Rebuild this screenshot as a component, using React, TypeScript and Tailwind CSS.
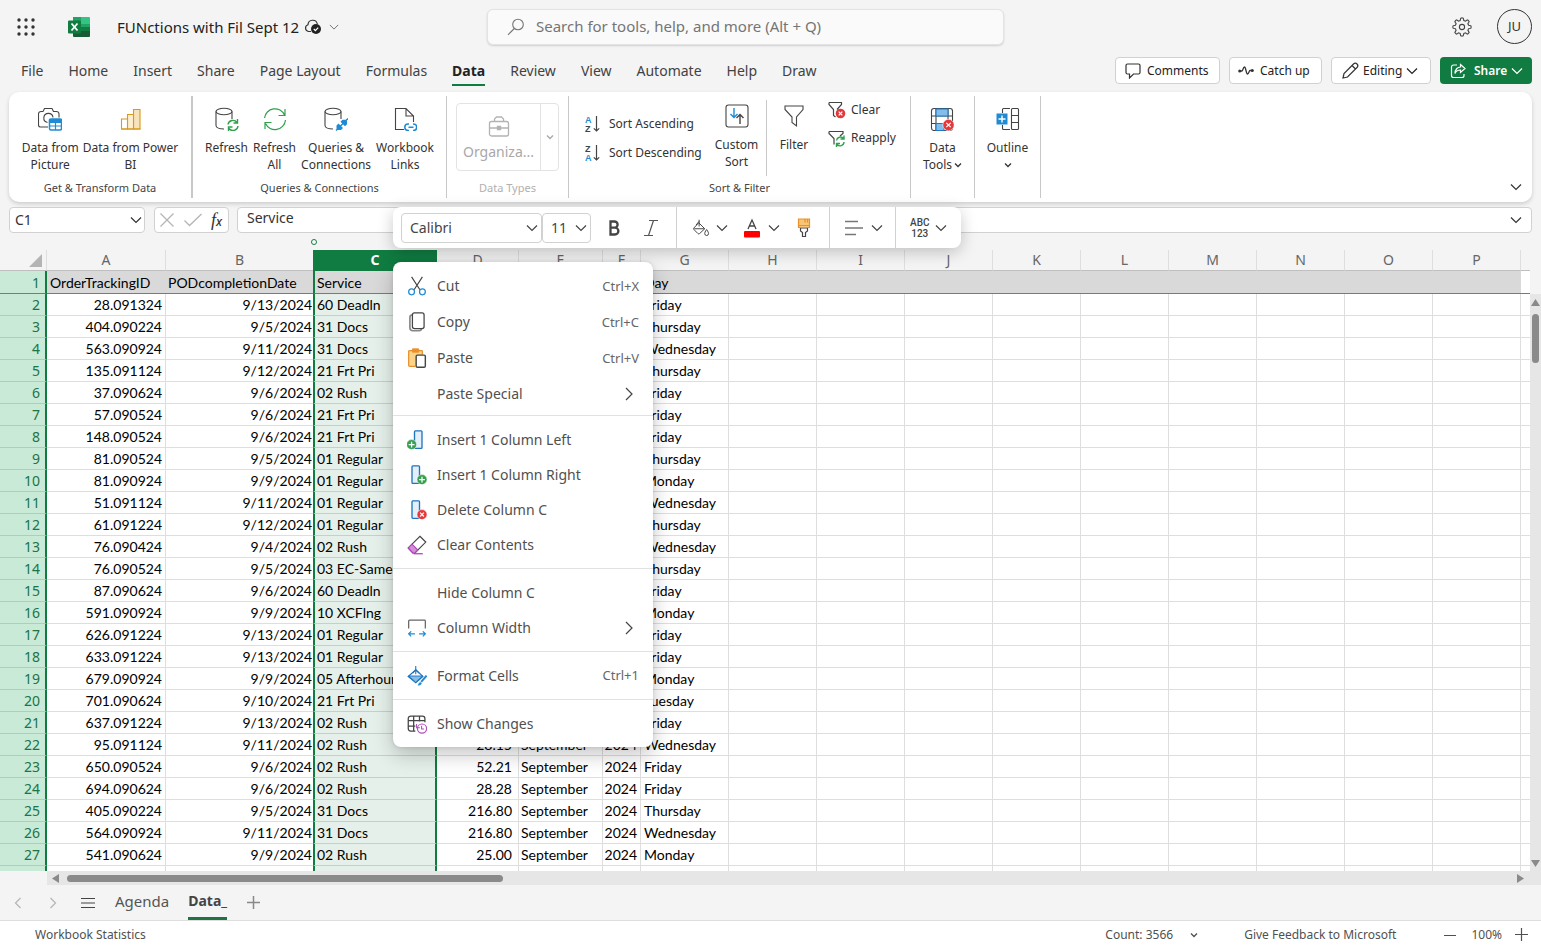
import React from "react";

type IconProps = { className?: string };

const Chevron = ({ className = "h-3 w-3" }: IconProps) => (
  <svg viewBox="0 0 12 12" className={className} fill="none" stroke="currentColor" strokeWidth="1.2">
    <path d="M1 3.500 6 8.500 11 3.500" />
  </svg>
);

const MiniChevron = () => (
  <svg viewBox="0 0 8 8" className="inline-block h-2 w-2" fill="none" stroke="currentColor" strokeWidth="1.3">
    <path d="M1 2.500 4 5.500 7 2.500" />
  </svg>
);

const Svg = ({ className = "h-6 w-6", children }: IconProps & { children: React.ReactNode }) => (
  <svg viewBox="0 0 24 24" className={className + " shrink-0"} fill="none" stroke="#444" strokeWidth="1.1">
    {children}
  </svg>
);

const Database = () => (
  <>
    <ellipse cx="9" cy="4.5" rx="8" ry="3.2" />
    <path d="M1 4.500V18.500C1 20.500 4.500 22 9 22M17 4.500V12" />
  </>
);

const PictureIcon = () => (
  <Svg className="h-6 w-6">
    <path d="M10 20H2.500A2 2 0 0 1 .500 18V7A2.500 2.500 0 0 1 3 4.500H5L6.500 1.500H14L15.500 4.500H18.500A2.500 2.500 0 0 1 21 7V10.500" />
    <path d="M9.500 15.500A4.600 4.600 0 1 1 15 10.500" />
    <rect x="11.500" y="12" width="12" height="11" rx="1.500" fill="#fff" stroke="#1e8bd4" strokeWidth="1.500" />
    <path d="M11.500 12.500h12v3h-12zM17.500 15v8M11.500 19h12" fill="#1e8bd4" stroke="#1e8bd4" strokeWidth="1.200" />
  </Svg>
);

const PowerBiIcon = () => (
  <Svg>
    <path d="M14.500 2.500h6.500v19.500h-6.500z" fill="#f6e3bb" stroke="#d99a1a" />
    <path d="M8.500 7.500h6v14.500h-6z" fill="#fbefd3" stroke="#d99a1a" />
    <path d="M2.500 12h6v10h-6z" fill="#fff" stroke="#d99a1a" />
    <path d="M2 22h19.500" stroke="#d99a1a" />
  </Svg>
);

const RefreshIcon = () => (
  <Svg>
    <Database />
    <g stroke="#2fa14c" strokeWidth="1.400">
      <path d="M13 17.500a5 5 0 0 1 9-2M22.500 12v4H18.500M23 19a5 5 0 0 1-9 2.500M13.500 24v-4h4" />
    </g>
  </Svg>
);

const RefreshAllIcon = () => (
  <Svg>
    <g stroke="#2fa14c" strokeWidth="1.200">
      <path d="M1.500 11A10.500 10.500 0 0 1 21.500 8M22 2v6.500h-6.500M22.500 13A10.500 10.500 0 0 1 2.500 16.500M2 22v-6.500h6.500" />
    </g>
  </Svg>
);

const QueriesIcon = () => (
  <Svg>
    <Database />
    <path d="M12 23.500 24 11.500" stroke="#1e8bd4" strokeWidth="1.500" />
    <path d="M14.500 16.500l4.500 4.500-2 2h-3l-1.500-1.500v-3zM16.500 14.800l2-2h3l1.500 1.500v3l-2 2z" fill="#1e8bd4" stroke="none" />
  </Svg>
);

const WorkbookLinksIcon = () => (
  <Svg>
    <path d="M11 22.500H2.500V1.500H13L20.500 9v6M13 1.500V9h7.500" />
    <path d="M16 17h-1a3.200 3.200 0 0 0 0 6.400h1M20 17h.500a3.200 3.200 0 0 1 0 6.400H20M15.500 20.200h5" stroke="#1e8bd4" strokeWidth="1.500" />
  </Svg>
);

const BriefcaseIcon = () => (
  <svg viewBox="0 0 24 24" className="h-6 w-6" fill="none" stroke="#b3b3b3" strokeWidth="1.300">
    <rect x="2.500" y="7.500" width="19" height="14.500" rx="2" />
    <path d="M7.500 7.500V5l2-2h5l2 2v2.500M2.500 14h19" />
    <path d="M10.500 12.500h3v3h-3z" fill="#b3b3b3" />
  </svg>
);

const SortIcon = ({ down = false }: { down?: boolean }) => (
  <svg viewBox="0 0 16 18" className="h-[18px] w-4 shrink-0" fill="none" stroke="#444" strokeWidth="1.200">
    <text x="0" y="8" fontFamily="Liberation Sans, sans-serif" fontSize="9" fontWeight="bold" stroke="none" fill={down ? "#444" : "#1e8bd4"}>
      {down ? "Z" : "A"}
    </text>
    <text x="0" y="17" fontFamily="Liberation Sans, sans-serif" fontSize="9" fontWeight="bold" stroke="none" fill={down ? "#1e8bd4" : "#444"}>
      {down ? "A" : "Z"}
    </text>
    <path d="M11.500 1v15M8.800 13.300l2.700 2.700 2.700-2.700" />
  </svg>
);

const CustomSortIcon = () => (
  <Svg>
    <rect x="1" y="1" width="22" height="22" rx="2.500" />
    <path d="M9 4v9.500M5.500 10 9 13.500l3.500-3.500" stroke="#1e8bd4" strokeWidth="1.400" />
    <path d="M15 20v-9.500M11.500 14l3.500-3.500 3.500 3.500" strokeWidth="1.400" />
  </Svg>
);

const FilterIcon = () => (
  <Svg>
    <path d="M3 2h18v3.500L14.500 13v9L10 18.500V13L3 5.500z" />
  </Svg>
);

const ClearFilterIcon = () => (
  <svg viewBox="0 0 18 18" className="h-[18px] w-[18px] shrink-0" fill="none" stroke="#444" strokeWidth="1.200">
    <path d="M1 1.500h12.500v2L9 8.500M1 1.500v2l4.500 5v6l2 1.500" />
    <circle cx="12.500" cy="12.500" r="4.800" fill="#e5383b" stroke="none" />
    <path d="m10.700 10.700 3.600 3.600m0-3.600-3.600 3.600" stroke="#fff" />
  </svg>
);

const ReapplyIcon = () => (
  <svg viewBox="0 0 18 18" className="h-[18px] w-[18px] shrink-0" fill="none" stroke="#444" strokeWidth="1.200">
    <path d="M1 2.500h14v2l-3 2.500M1 2.500v2l5 5v6" />
    <path d="M8.500 11.500a4 4 0 0 1 7-2M16 6.500v3.500h-3.500M16 13a4 4 0 0 1-7 2.500M8.500 18v-3.500H12" stroke="#2fa14c" strokeWidth="1.400" />
  </svg>
);

const DataToolsIcon = () => (
  <Svg>
    <rect x="1.500" y="1.500" width="21" height="22" rx="2.500" />
    <path d="M1.500 9h21M1.500 16.500h21M6 1.500v22M18 1.500v22" />
    <path d="M6 2h12v7H6zM6 16.500h8v7H6z" fill="#83bdec" stroke="#1e78c8" />
    <circle cx="18.500" cy="18" r="5.700" fill="#e5383b" stroke="#fff" strokeWidth=".600" />
    <path d="m16.300 15.800 4.400 4.400m0-4.400-4.400 4.400" stroke="#fff" strokeWidth="1.200" />
  </Svg>
);

const OutlineIcon = () => (
  <Svg>
    <rect x="15.500" y="1.500" width="7" height="21" rx="1" />
    <path d="M15.500 8.500h7M15.500 15.500h7M14 1.500H7.500a1 1 0 0 0-1 1V6M14 22.500H7.500a1 1 0 0 1-1-1V18" />
    <rect x="0.500" y="6.500" width="11" height="11" fill="#1e8bd4" stroke="none" />
    <path d="M6 8.500v7M2.500 12h7" stroke="#fff" strokeWidth="1.400" />
  </Svg>
);

const RibbonButton = ({ icon, lines, className = "" }: { icon: React.ReactNode; lines: React.ReactNode[]; className?: string }) => (
  <button className={"flex flex-col items-center whitespace-nowrap text-xs leading-[17px] text-[#333] " + className}>
    {icon}
    <span className="mt-2 flex flex-col items-center">
      {lines.map((l, i) => (
        <span key={i} className="flex h-[17px] items-center gap-0.5 leading-[17px]">{l}</span>
      ))}
    </span>
  </button>
);

const Group = ({ label, className, muted = false, children }: { label?: string; className: string; muted?: boolean; children: React.ReactNode }) => (
  <section className={"flex shrink-0 flex-col border-[#c8c8c8] " + className}>
    <div className="flex flex-1 justify-center">{children}</div>
    <div className={"h-[18px] text-center text-[11px] leading-4 " + (muted ? "text-[#b0b0b0]" : "text-[#444]")}>{label}</div>
  </section>
);

const tabs = ["File", "Home", "Insert", "Share", "Page Layout", "Formulas", "Data", "Review", "View", "Automate", "Help", "Draw"];

type Row = { n: number; a: string; b: string; c: string; g: string; d?: string; e?: string; f?: string };

const S = { e: "September", f: "2024" };
const rows: Row[] = [
  { n: 2, a: "28.091324", b: "9/13/2024", c: "60 Deadln", g: "Friday" },
  { n: 3, a: "404.090224", b: "9/5/2024", c: "31 Docs", g: "Thursday" },
  { n: 4, a: "563.090924", b: "9/11/2024", c: "31 Docs", g: "Wednesday" },
  { n: 5, a: "135.091124", b: "9/12/2024", c: "21 Frt Pri", g: "Thursday" },
  { n: 6, a: "37.090624", b: "9/6/2024", c: "02 Rush", g: "Friday" },
  { n: 7, a: "57.090524", b: "9/6/2024", c: "21 Frt Pri", g: "Friday" },
  { n: 8, a: "148.090524", b: "9/6/2024", c: "21 Frt Pri", g: "Friday" },
  { n: 9, a: "81.090524", b: "9/5/2024", c: "01 Regular", g: "Thursday" },
  { n: 10, a: "81.090924", b: "9/9/2024", c: "01 Regular", g: "Monday" },
  { n: 11, a: "51.091124", b: "9/11/2024", c: "01 Regular", g: "Wednesday" },
  { n: 12, a: "61.091224", b: "9/12/2024", c: "01 Regular", g: "Thursday" },
  { n: 13, a: "76.090424", b: "9/4/2024", c: "02 Rush", g: "Wednesday" },
  { n: 14, a: "76.090524", b: "9/5/2024", c: "03 EC-Same", g: "Thursday" },
  { n: 15, a: "87.090624", b: "9/6/2024", c: "60 Deadln", g: "Friday" },
  { n: 16, a: "591.090924", b: "9/9/2024", c: "10 XCFlng", g: "Monday" },
  { n: 17, a: "626.091224", b: "9/13/2024", c: "01 Regular", g: "Friday" },
  { n: 18, a: "633.091224", b: "9/13/2024", c: "01 Regular", g: "Friday" },
  { n: 19, a: "679.090924", b: "9/9/2024", c: "05 Afterhour", g: "Monday" },
  { n: 20, a: "701.090624", b: "9/10/2024", c: "21 Frt Pri", g: "Tuesday" },
  { n: 21, a: "637.091224", b: "9/13/2024", c: "02 Rush", g: "Friday" },
  { n: 22, a: "95.091124", b: "9/11/2024", c: "02 Rush", g: "Wednesday", d: "28.15", ...S },
  { n: 23, a: "650.090524", b: "9/6/2024", c: "02 Rush", g: "Friday", d: "52.21", ...S },
  { n: 24, a: "694.090624", b: "9/6/2024", c: "02 Rush", g: "Friday", d: "28.28", ...S },
  { n: 25, a: "405.090224", b: "9/5/2024", c: "31 Docs", g: "Thursday", d: "216.80", ...S },
  { n: 26, a: "564.090924", b: "9/11/2024", c: "31 Docs", g: "Wednesday", d: "216.80", ...S },
  { n: 27, a: "541.090624", b: "9/9/2024", c: "02 Rush", g: "Monday", d: "25.00", ...S },
];

const emptyCols = ["H", "I", "J", "K", "L", "M", "N", "O", "P"];
const cell = "h-[22px] overflow-hidden whitespace-nowrap border-b border-r border-[#dedede] pt-px ";
const selCell = "h-[22px] overflow-hidden whitespace-nowrap border-x-2 border-b border-x-[#107c41] border-b-[#c6d0ca] bg-[#e6f0ea] pt-px pl-0.5 text-left";
const rowHeadBase = "h-[22px] border-b border-r-2 border-r-[#107c41] bg-[#c8ead7] pt-px pr-[5px] text-right font-['Noto_Sans',sans-serif] text-sm font-normal leading-5 text-[#217346] ";

const BodyRow = ({ r }: { r: Row }) => (
  <tr>
    <th scope="row" className={rowHeadBase + "border-b-[#9fd5b8]"}>{r.n || ""}</th>
    <td className={cell + "pr-[3px] text-right"}>{r.a}</td>
    <td className={cell + "border-r-0 pr-px text-right"}>{r.b}</td>
    <td className={selCell}>{r.c}</td>
    <td className={cell + "pr-1.5 text-right"}>{r.d}</td>
    <td className={cell + "pl-0.5"}>{r.e}</td>
    <td className={cell + "pr-[3px] text-right"}>{r.f}</td>
    <td className={cell + "pl-[3px]"}>{r.g}</td>
    {emptyCols.map((c) => (
      <td key={c} className={cell} />
    ))}
    <td className={cell + "border-r-0"} />
  </tr>
);

const Sheet = () => {
  const head = "h-[21px] border-b border-r border-b-[#bfbfbf] border-r-[#dedede] p-0 text-center text-sm font-normal leading-5 text-[#666]";
  const gray = "h-[23px] overflow-hidden border-b border-[#7a7a7a] bg-[#d9d9d9] pt-px ";
  return (
    <table className="w-full table-fixed border-separate border-spacing-0 bg-white font-[Lato,sans-serif] text-sm leading-5 text-black">
      <colgroup>
        <col className="w-[47px]" />
        <col className="w-[119px]" />
        <col className="w-[147px]" />
        <col className="w-[124px]" />
        <col className="w-[82px]" />
        <col className="w-[84px]" />
        <col className="w-[38px]" />
        <col className="w-[88px]" />
        {emptyCols.map((c) => (
          <col key={c} className="w-[88px]" />
        ))}
        <col />
      </colgroup>
      <thead className="bg-[#f4f4f4] font-['Noto_Sans',sans-serif]">
        <tr>
          <th className={head}>
            <svg viewBox="0 0 13 13" className="ml-[29px] h-[13px] w-[13px]">
              <path d="M13 0v13H0z" fill="#b4b4b4" />
            </svg>
          </th>
          <th className={head}>A</th>
          <th className={head + " border-r-0"}>B</th>
          <th className="h-[21px] border-b border-[#107c41] bg-[#107c41] p-0 text-center text-sm font-bold leading-5 text-white">C</th>
          {["D", "E", "F", "G", ...emptyCols].map((c) => (
            <th key={c} className={head}>{c}</th>
          ))}
          <th className={head + " border-r-0"} />
        </tr>
      </thead>
      <tbody>
        <tr>
          <th scope="row" className={rowHeadBase + "border-b-[#7a7a7a]"}>1</th>
          <td className={gray + "pl-[3px]"}>OrderTrackingID</td>
          <td className={gray + "pl-0.5"}>PODcompletionDate</td>
          <td className={gray + "border-x-2 border-x-[#107c41] pl-0.5"}>Service</td>
          <td className={gray} />
          <td className={gray} />
          <td className={gray} />
          <td className={gray + "pl-[3px]"}>Day</td>
          {emptyCols.map((c) => (
            <td key={c} className={gray} />
          ))}
          <td className="border-b border-[#7a7a7a] bg-white" />
        </tr>
        {rows.map((r) => (
          <BodyRow key={r.n} r={r} />
        ))}
        <BodyRow r={{ n: 0, a: "", b: "", c: "", g: "" }} />
      </tbody>
    </table>
  );
};

const InsertColumn = ({ side }: { side: "left" | "right" | "delete" }) => (
  <Svg className="h-5 w-5">
    <rect x={side === "left" ? 9 : 6} y="1" width="9" height="21" rx="1" fill="#e3f0fb" stroke="#1e74bd" strokeWidth="1.600" />
    <circle cx={side === "left" ? 5.500 : 18} cy="17.500" r="6" fill={side === "delete" ? "#e5383b" : "#36a04f"} stroke="#fff" strokeWidth=".600" />
    <path
      d={side === "left" ? "M5.500 14v7M2 17.500h7" : side === "right" ? "M18 14v7M14.500 17.500h7" : "m15.700 15.200 4.600 4.600m0-4.600-4.600 4.600"}
      stroke="#fff"
      strokeWidth="1.500"
    />
  </Svg>
);

const CutIcon = () => (
  <Svg className="h-5 w-5">
    <path d="M5.500 1 15.500 16.500M18.500 1 8.500 16.500" strokeWidth="1.400" />
    <circle cx="5.500" cy="19" r="3.500" stroke="#1e8bd4" strokeWidth="1.500" />
    <circle cx="18.500" cy="19" r="3.500" stroke="#1e8bd4" strokeWidth="1.500" />
  </Svg>
);
const CopyIcon = () => (
  <Svg className="h-5 w-5">
    <path d="M6 3.500A3 3 0 0 0 3.500 6.500v12.500A3.500 3.500 0 0 0 7 22.500h7.500A3 3 0 0 0 17.500 20" stroke="#888" strokeWidth="2" />
    <rect x="6.500" y="1" width="14" height="19" rx="2.500" fill="#fff" strokeWidth="1.500" />
  </Svg>
);
const PasteIcon = () => (
  <Svg className="h-5 w-5">
    <path d="M10 22H3a1 1 0 0 1-1-1V4a1 1 0 0 1 1-1h14.500a1 1 0 0 1 1 1v4" fill="#fbd48a" stroke="#e8912d" strokeWidth="1.500" />
    <path d="M6.500 1h7.500v4H6.500z" fill="#e8912d" stroke="#e8912d" />
    <rect x="11" y="8.500" width="11" height="14.500" rx="1.500" fill="#fff" strokeWidth="1.700" />
  </Svg>
);
const EraserIcon = () => (
  <Svg className="h-5 w-5">
    <path d="M15.500 1.500 22.500 8.500 9.500 21.500H7L1.500 15.500z" fill="#fff" strokeWidth="1.400" />
    <path d="M6 11l7 7-3.500 3.500H7L1.500 15.500z" fill="#d68bdb" stroke="#a944b3" strokeWidth="1.300" />
    <path d="M8 22.500h11" stroke="#a944b3" strokeWidth="1.500" />
  </Svg>
);
const WidthIcon = () => (
  <Svg className="h-5 w-5">
    <path d="M2 12.500V3.500a1 1 0 0 1 1-1h18a1 1 0 0 1 1 1v9" stroke="#666" strokeWidth="1.500" />
    <path d="M2 19h7.500M14.500 19H22M5 16l-3 3 3 3M19 16l3 3-3 3" stroke="#1e8bd4" strokeWidth="1.500" />
  </Svg>
);
const FormatIcon = () => (
  <Svg className="h-5 w-5">
    <path d="M10.500 4.500 19 12.500l-8.500 7.500L1.500 12.500z" fill="#fff" stroke="#1e74bd" strokeWidth="1.500" />
    <path d="M2 12h16.500L10.500 19.500z" fill="#83bdec" stroke="#1e74bd" />
    <path d="M10.500 0v10M7 8.500l3.500-4 4 4" stroke="#1e74bd" strokeWidth="1.300" />
    <path d="M23.500 11.500l-6.500 7.500" stroke="#1e8bd4" strokeWidth="2.400" />
    <path d="M12.500 23.500c1.500-.500 1-4 3.500-4s2.500 4-3.500 4z" fill="#1e8bd4" stroke="none" />
  </Svg>
);
const ChangesIcon = () => (
  <Svg className="h-5 w-5">
    <path d="M10 20.500H4.500a3 3 0 0 1-3-3v-12a3 3 0 0 1 3-3h14a3 3 0 0 1 3 3V10M1.500 8h20M1.500 14.500H10M8 2.500v18M15 2.500V9" strokeWidth="1.500" />
    <circle cx="18" cy="17.500" r="5.500" stroke="#b14fbb" fill="#fff" strokeWidth="1.400" />
    <path d="M17.500 14v4h3M11.500 12v4.500h4" stroke="#b14fbb" strokeWidth="1.300" />
  </Svg>
);

const MenuItem = ({ icon, label, hint, arrow = false, tall = false }: { icon?: React.ReactNode; label: string; hint?: string; arrow?: boolean; tall?: boolean }) => (
  <button role="menuitem" className={"flex w-full items-center pl-[14px] pr-[14px] text-[#505050] " + (tall ? "h-9" : "h-[35px]")}>
    <span className="mr-[10px] flex w-5">{icon}</span>
    <span className="flex-1 text-left">{label}</span>
    {hint && <span className="text-[13px] text-[#666]">{hint}</span>}
    {arrow && (
      <svg viewBox="0 0 12 14" className="mr-1 h-[14px] w-3" fill="none" stroke="#444" strokeWidth="1.200">
        <path d="M3 1l6 6-6 6" />
      </svg>
    )}
  </button>
);

const ContextMenu = () => (
  <div role="menu" className="absolute left-[393px] top-[262px] w-[260px] divide-y divide-[#e1e1e1] rounded-lg bg-white text-sm shadow-[0_8px_20px_rgba(0,0,0,0.22),0_0_4px_rgba(0,0,0,0.12)]">
    <div className="pb-[3px] pt-1.5">
      <MenuItem tall icon={<CutIcon />} label="Cut" hint="Ctrl+X" />
      <MenuItem tall icon={<CopyIcon />} label="Copy" hint="Ctrl+C" />
      <MenuItem tall icon={<PasteIcon />} label="Paste" hint="Ctrl+V" />
      <MenuItem tall label="Paste Special" arrow />
    </div>
    <div className="py-1.5">
      <MenuItem icon={<InsertColumn side="left" />} label="Insert 1 Column Left" />
      <MenuItem icon={<InsertColumn side="right" />} label="Insert 1 Column Right" />
      <MenuItem icon={<InsertColumn side="delete" />} label="Delete Column C" />
      <MenuItem icon={<EraserIcon />} label="Clear Contents" />
    </div>
    <div className="py-1.5">
      <MenuItem label="Hide Column C" />
      <MenuItem icon={<WidthIcon />} label="Column Width" arrow />
    </div>
    <div className="py-1.5">
      <MenuItem icon={<FormatIcon />} label="Format Cells" hint="Ctrl+1" />
    </div>
    <div className="py-1.5">
      <MenuItem icon={<ChangesIcon />} label="Show Changes" />
    </div>
  </div>
);

const PickList = ({ label, value, className }: { label: string; value: string; className: string }) => (
  <label className={"relative flex h-[30px] items-center rounded border border-[#d1d1d1] " + className}>
    <select aria-label={label} className="w-full appearance-none bg-transparent pl-2 text-sm text-[#444] outline-none">
      <option>{value}</option>
    </select>
    <Chevron className="pointer-events-none absolute right-[3px] h-3 w-3" />
  </label>
);

const MiniToolbar = () => (
  <div role="toolbar" aria-label="Formatting" className="absolute left-[393px] top-[207px] flex h-[41px] w-[568px] items-stretch rounded-lg bg-white text-[#444] shadow-[0_4px_16px_rgba(0,0,0,0.22)]">
    <div className="flex w-[283px] items-center pl-2">
      <PickList label="Font" value="Calibri" className="w-[141px]" />
      <PickList label="Font size" value="11" className="w-[49px]" />
      <button aria-label="Bold" className="ml-4">
        <svg viewBox="0 0 16 18" className="h-[18px] w-4" fill="none" stroke="#444" strokeWidth="2.300">
          <path d="M3.500 2.500h4a3 3 0 0 1 0 6.200H3.500zM3.500 8.700h4.500a3.400 3.400 0 0 1 0 6.800h-4.500z" />
        </svg>
      </button>
      <button aria-label="Italic" className="ml-5">
        <svg viewBox="0 0 16 18" className="h-[18px] w-4" fill="none" stroke="#555" strokeWidth="1.200">
          <path d="M6 1.500h9M1 16.500h9M10.500 1.500l-5 15" />
        </svg>
      </button>
    </div>
    <div className="flex w-[154px] items-center border-x border-[#d1d1d1] pl-[15px]">
      <button aria-label="Fill color" className="flex items-center gap-[6px]">
        <Svg className="h-[18px] w-[18px]">
          <path d="M9 5 17 13l-7 6.500a1.500 1.500 0 0 1-2 0L2.500 14a1.500 1.500 0 0 1 0-2zM3 13h13.500M9.500 1v9M5.500 8 9.500 3" strokeWidth="1.300" />
          <path d="M19.500 14c2 3 2.500 4 2.500 5.500a2.500 2.500 0 0 1-5 0c0-1.500.500-2.500 2.500-5.500z" strokeWidth="1.300" />
        </Svg>
        <Chevron />
      </button>
      <button aria-label="Font color" className="ml-4 flex items-center gap-2">
        <svg viewBox="0 0 16 20" className="h-5 w-4" fill="none" stroke="#444" strokeWidth="1.300">
          <path d="M4 11 8 2 12 11M5.300 8h5.400" />
          <rect x="0" y="13" width="16" height="6.500" rx="1" fill="#f00" stroke="none" />
        </svg>
        <Chevron />
      </button>
      <button aria-label="Format painter" className="ml-[17px]">
        <svg viewBox="0 0 14 20" className="h-5 w-[14px]" fill="none" strokeWidth="1.200">
          <path d="M3.500 10v3L5.500 14.500v4h3v-4L10.500 13v-3z" fill="#fff" stroke="#444" />
          <path d="M1.500 1h11v8.500h-11z" fill="#fbc575" stroke="#e8912d" />
          <path d="M8 1v3.500M10.500 1v3.500M1.500 7.500h11" stroke="#e8912d" />
        </svg>
      </button>
    </div>
    <button aria-label="Alignment" className="flex w-[66px] items-center gap-2 border-r border-[#d1d1d1] pl-[15px]">
      <svg viewBox="0 0 18 18" className="h-[18px] w-[18px]" stroke="#777" strokeWidth="1.300">
        <path d="M0 2.500h13M0 9h18M0 15.500h11" />
      </svg>
      <Chevron />
    </button>
    <button aria-label="Number format" className="flex items-center gap-[6px] pl-[14px]">
      <span className="text-center font-[Roboto,sans-serif] text-[10px] font-medium leading-[11px]">
        ABC
        <br />
        123
      </span>
      <Chevron />
    </button>
  </div>
);

const ExcelLogo = () => (
  <svg viewBox="0 0 24 22" className="h-[22px] w-6">
    <path d="M6 1h8v7H6z" fill="#21a366" />
    <path d="M14 1h8a1 1 0 0 1 1 1v6h-9z" fill="#33c481" />
    <path d="M6 8h8v7H6z" fill="#107c41" />
    <path d="M14 8h9v7h-9z" fill="#21a366" />
    <path d="M6 15h17v5a1 1 0 0 1-1 1H7a1 1 0 0 1-1-1z" fill="#185c37" />
    <path d="M14 15h9V11h-9z" fill="#107c41" />
    <rect x="1" y="4.500" width="13" height="13" rx="1" fill="#107c41" />
    <path d="M4.500 7.500 10.500 14.500M10.500 7.500 4.500 14.500" stroke="#fff" strokeWidth="1.800" />
  </svg>
);

const gearPath = Array.from({ length: 96 }, (_, i) => {
  const t = (i / 96) * Math.PI * 2;
  const r = 7.9 + 1.2 * Math.tanh(3 * Math.cos(8 * t));
  return (i ? "L" : "M") + (10 + r * Math.sin(t)).toFixed(2) + " " + (10 + r * Math.cos(t)).toFixed(2);
}).join("") + "Z";

const actionButton = "flex h-[27px] items-center rounded border border-[#d1d1d1] bg-white text-xs text-[#222]";

export default function App() {
  return (
    <div className="relative flex h-screen flex-col overflow-hidden bg-[#f4f4f4] font-['Noto_Sans',sans-serif] text-sm text-[#333]">
      <header className="flex h-[53px] shrink-0 items-center pr-[9px]">
        <div className="flex w-[487px] shrink-0 items-center pl-[17px]">
          <button aria-label="App launcher">
            <svg viewBox="0 0 18 18" className="h-[18px] w-[18px]" fill="#333">
              {[2, 9, 16].map((y) => [2, 9, 16].map((x) => <circle key={x + "-" + y} cx={x} cy={y} r="1.700" />))}
            </svg>
          </button>
          <span className="ml-8"><ExcelLogo /></span>
          <h1 className="ml-[26px] text-[15px] leading-5 text-[#222]">FUNctions with Fil Sept 12</h1>
          <svg viewBox="0 0 18 16" className="ml-[5px] h-4 w-[18px]" fill="none" stroke="#333" strokeWidth="1.200">
            <path d="M7 12.500H4.500A3.500 3.500 0 0 1 4 5.700 4.700 4.700 0 0 1 13.300 5" />
            <circle cx="12" cy="10" r="5" fill="#222" stroke="none" />
            <path d="m9.800 10 1.600 1.600 2.800-3" stroke="#fff" />
          </svg>
          <button aria-label="File menu" className="ml-[7px] text-[#777]"><Chevron className="h-[10px] w-[10px]" /></button>
        </div>
        <label className="flex h-9 w-[517px] items-center rounded-md border border-[#e3e3e3] bg-[#fafafa] pl-[19px] shadow-[0_1px_2px_rgba(0,0,0,0.15)]">
          <svg viewBox="0 0 18 18" className="h-[18px] w-[18px]" fill="none" stroke="#777" strokeWidth="1.100">
            <circle cx="11" cy="6.500" r="5.300" />
            <path d="M7.300 10.500 1 16.800" />
          </svg>
          <input
            aria-label="Search"
            placeholder="Search for tools, help, and more (Alt + Q)"
            className="ml-[11px] flex-1 bg-transparent text-[15px] outline-none placeholder:text-[#757575]"
          />
        </label>
        <button aria-label="Settings" className="ml-auto">
          <svg viewBox="0 0 20 20" className="h-5 w-5" fill="none" stroke="#444" strokeWidth="1.100">
            <path d={gearPath} />
            <circle cx="10" cy="10" r="2.600" />
          </svg>
        </button>
        <button className="ml-[25px] h-[35px] w-[35px] rounded-full border border-[#333] text-[13px] text-[#333]">JU</button>
      </header>

      <div className="flex h-[39px] shrink-0 items-start pl-[21px] pr-[9px]">
        <nav className="flex gap-[25px] pt-2">
          {tabs.map((t) =>
            t === "Data" ? (
              <button key={t} className="h-[25px] border-b-2 border-[#107c41] pb-1 font-bold leading-5 text-[#222]">{t}</button>
            ) : (
              <button key={t} className="h-[25px] whitespace-nowrap border-b-2 border-transparent pb-1 leading-5 text-[#424242]">{t}</button>
            )
          )}
        </nav>
        <div className="ml-auto flex gap-[9px] pt-1">
          <button className={actionButton + " w-[105px] gap-1.5 pl-[9px]"}>
            <svg viewBox="0 0 16 16" className="h-4 w-4" fill="none" stroke="#333" strokeWidth="1.200">
              <path d="M2.500 1h11A1.500 1.500 0 0 1 15 2.500v7a1.500 1.500 0 0 1-1.500 1.500H8.500L4.500 15v-4h-2A1.500 1.500 0 0 1 1 9.500v-7A1.500 1.500 0 0 1 2.500 1z" />
            </svg>
            Comments
          </button>
          <button className={actionButton + " w-[93px] gap-1.5 whitespace-nowrap pl-[8px]"}>
            <svg viewBox="0 0 16 12" className="h-3 w-4" fill="none" stroke="#333" strokeWidth="1.300">
              <path d="M1.500 6H4C5 6 5 2 6.500 2S8 9 9.500 9 11 5.500 12 5.500h2" />
              <circle cx="1.700" cy="6" r="1.500" fill="#333" stroke="none" />
              <circle cx="14.300" cy="5.500" r="1.500" fill="#333" stroke="none" />
            </svg>
            Catch up
          </button>
          <button className={actionButton + " w-[100px] gap-1 pl-[9px]"}>
            <svg viewBox="0 0 18 18" className="h-[18px] w-[18px]" fill="none" stroke="#333" strokeWidth="1.200">
              <path d="M2 16l1-4.500L12.500 2a2.300 2.300 0 0 1 3.500 3.500L6.500 15zM11 3.500 14.500 7" />
            </svg>
            Editing
            <Chevron />
          </button>
          <button className="flex h-[27px] w-[92px] items-center gap-1 rounded bg-[#107c41] pl-[10px] text-xs font-semibold text-white">
            <svg viewBox="0 0 16 16" className="mr-1 h-4 w-4" fill="none" stroke="#fff" strokeWidth="1.200">
              <path d="M7 2H3.500A2 2 0 0 0 1.500 4v8.500a2 2 0 0 0 2 2H12a2 2 0 0 0 2-2V11" />
              <path d="M10.500 1.500 15 5.500l-4.500 4V7C8 7 6 8 5 10.500 5 6.500 7.500 4 10.500 4z" />
            </svg>
            Share
            <Chevron />
          </button>
        </div>
      </div>

      <div className="mx-[9px] flex h-[110px] shrink-0 rounded-[10px] bg-white pb-1 pt-1 shadow-[0_2px_4px_rgba(0,0,0,0.16)]">
        <Group className="w-[184px] border-r-2" label="Get & Transform Data">
          <RibbonButton className="mr-1 pt-[11px]" icon={<PictureIcon />} lines={["Data from", "Picture"]} />
          <RibbonButton className="pt-[11px]" icon={<PowerBiIcon />} lines={["Data from Power", "BI"]} />
        </Group>
        <Group className="w-[254px] border-r" label="Queries & Connections">
          <RibbonButton className="mr-[5px] pt-[11px]" icon={<RefreshIcon />} lines={["Refresh"]} />
          <RibbonButton className="mr-[5px] pt-[11px]" icon={<RefreshAllIcon />} lines={["Refresh", "All"]} />
          <RibbonButton className="mr-[5px] pt-[11px]" icon={<QueriesIcon />} lines={["Queries &", "Connections"]} />
          <RibbonButton className="pt-[11px]" icon={<WorkbookLinksIcon />} lines={["Workbook", "Links"]} />
        </Group>
        <Group className="w-[122px] border-r" label="Data Types" muted>
          <div className="mt-[7px] flex h-[68px] w-[103px] rounded border border-[#e3e3e3] text-[#a8a8a8]">
            <button className="flex flex-1 flex-col items-center justify-center gap-1 pt-px leading-5">
              <BriefcaseIcon />
              Organiza...
            </button>
            <button aria-label="More data types" className="flex w-[18px] items-center justify-center border-l border-[#e3e3e3]">
              <MiniChevron />
            </button>
          </div>
        </Group>
        <Group className="w-[342px] border-r" label="Sort & Filter">
          <div className="flex w-full text-xs">
            <div className="flex w-[138px] flex-col gap-[11px] pl-4 pt-[19px]">
              <button className="flex items-center gap-2 whitespace-nowrap leading-[18px]"><SortIcon />Sort Ascending</button>
              <button className="flex items-center gap-2 whitespace-nowrap leading-[18px]"><SortIcon down />Sort Descending</button>
            </div>
            <div className="mt-1 flex h-[76px] w-[60px] justify-center border-r border-[#c8c8c8]">
              <RibbonButton className="pt-1" icon={<CustomSortIcon />} lines={["Custom", "Sort"]} />
            </div>
            <RibbonButton className="w-[54px] pt-2" icon={<FilterIcon />} lines={["Filter"]} />
            <div className="flex flex-col gap-[10px] pl-[7px] pt-[5px]">
              <button className="flex items-center gap-[5px] leading-[18px]"><ClearFilterIcon />Clear</button>
              <button className="flex items-center gap-[5px] leading-[18px]"><ReapplyIcon />Reapply</button>
            </div>
          </div>
        </Group>
        <Group className="w-16 border-r">
          <RibbonButton className="pt-[11px]" icon={<DataToolsIcon />} lines={["Data", <>Tools<MiniChevron /></>]} />
        </Group>
        <Group className="w-[66px] border-r">
          <RibbonButton className="pt-[11px]" icon={<OutlineIcon />} lines={["Outline", <MiniChevron />]} />
        </Group>
        <button aria-label="Collapse ribbon" className="mb-[5px] ml-auto mr-[10px] self-end">
          <Chevron />
        </button>
      </div>

      <div className="mx-[9px] mt-[5px] flex h-[26px] shrink-0">
        <label className="flex w-[136px] items-center rounded border border-[#d1d1d1] bg-white pl-[5px] pr-[2px]">
          <input aria-label="Name box" defaultValue="C1" className="w-0 flex-1 bg-transparent text-sm outline-none" />
          <Chevron />
        </label>
        <div className="ml-[9px] flex w-[75px] items-center justify-between rounded border border-[#d1d1d1] bg-white px-[5px]">
          <button aria-label="Cancel">
            <svg viewBox="0 0 14 14" className="h-[14px] w-[14px]" stroke="#b5b5b5" strokeWidth="1.300"><path d="M.500.500l13 13M13.500.500l-13 13" /></svg>
          </button>
          <button aria-label="Enter">
            <svg viewBox="0 0 18 14" className="h-[14px] w-[18px]" fill="none" stroke="#b5b5b5" strokeWidth="1.300"><path d="M.500 7.500l5 5L17.500 1" /></svg>
          </button>
          <button aria-label="Insert function" className="pr-px font-['Liberation_Serif',serif] text-lg italic leading-5 text-[#333]">
            f<span className="font-['Noto_Sans',sans-serif] text-xs font-medium">x</span>
          </button>
        </div>
        <div className="ml-2 flex flex-1 rounded border border-[#d1d1d1] bg-white pl-[9px] pr-[9px]">
          <input aria-label="Formula bar" defaultValue="Service" className="h-5 flex-1 bg-transparent text-sm outline-none" />
          <button aria-label="Expand formula bar"><Chevron /></button>
        </div>
      </div>

      <main className="mt-[17px] flex min-h-0 flex-1">
        <div className="min-w-0 flex-1 overflow-hidden"><Sheet /></div>
        <div className="mt-11 flex w-[11px] flex-col items-center bg-[#e6e6e6] pr-px">
          <svg viewBox="0 0 9 7" className="mt-[5px] h-[7px] w-[9px]"><path d="M4.500 0 9 7H0z" fill="#8a8a8a" /></svg>
          <div className="mt-2 h-[49px] w-[7px] rounded-full bg-[#8a8a8a]" />
          <svg viewBox="0 0 9 7" className="mb-1 mt-auto h-[7px] w-[9px]"><path d="M4.500 7 9 0H0z" fill="#8a8a8a" /></svg>
        </div>
      </main>

      <div className="ml-[47px] flex h-[14px] shrink-0 items-center bg-[#e6e6e6] pl-[5px] pr-[17px]">
        <svg viewBox="0 0 7 9" className="h-[9px] w-[7px]"><path d="M7 0v9L0 4.500z" fill="#8a8a8a" /></svg>
        <div className="ml-2 h-[7px] w-[436px] rounded-full bg-[#8a8a8a]" />
        <svg viewBox="0 0 7 9" className="ml-auto h-[9px] w-[7px]"><path d="M0 0v9l7-4.500z" fill="#8a8a8a" /></svg>
      </div>

      <div className="flex h-[35px] shrink-0 items-center pl-3 text-[#555]">
        <button aria-label="Previous sheet" className="rotate-90 text-[#b5b5b5]"><Chevron /></button>
        <button aria-label="Next sheet" className="ml-[23px] -rotate-90 text-[#b5b5b5]"><Chevron /></button>
        <button aria-label="All sheets" className="ml-[22px]">
          <svg viewBox="0 0 14 12" className="h-3 w-[14px]" stroke="#444" strokeWidth="1.200"><path d="M0 1.500h14M0 6h14M0 10.500h14" /></svg>
        </button>
        <button className="ml-5 self-stretch border-b-[3px] border-transparent text-[15px] leading-5">Agenda</button>
        <button className="ml-[19px] self-stretch border-b-[3px] border-[#217346] font-bold leading-5 text-[#444]">Data_</button>
        <button aria-label="New sheet" className="ml-5">
          <svg viewBox="0 0 13 13" className="h-[13px] w-[13px]" stroke="#888" strokeWidth="1.500"><path d="M6.500 0v13M0 6.500h13" /></svg>
        </button>
      </div>

      <footer className="flex h-[25px] shrink-0 items-center border-t border-[#dedede] bg-white pl-[35px] pr-[13px] pt-[3px] text-xs text-[#505050]">
        <button>Workbook Statistics</button>
        <button className="ml-auto flex items-center gap-[17px]">Count: 3566 <MiniChevron /></button>
        <a href="#feedback" className="ml-[46px]">Give Feedback to Microsoft</a>
        <button aria-label="Zoom out" className="ml-12">
          <svg viewBox="0 0 12 12" className="h-3 w-3" stroke="#505050"><path d="M0 6.500h12" /></svg>
        </button>
        <span className="ml-[15px]">100%</span>
        <button aria-label="Zoom in" className="ml-[13px]">
          <svg viewBox="0 0 13 13" className="h-[13px] w-[13px]" stroke="#505050" strokeWidth="1.200"><path d="M6.500 0v13M0 6.500h13" /></svg>
        </button>
      </footer>

      <span className="absolute left-[311px] top-[239px] h-[6px] w-[6px] rounded-full border border-[#107c41] bg-white" />
      <MiniToolbar />
      <ContextMenu />
    </div>
  );
}
